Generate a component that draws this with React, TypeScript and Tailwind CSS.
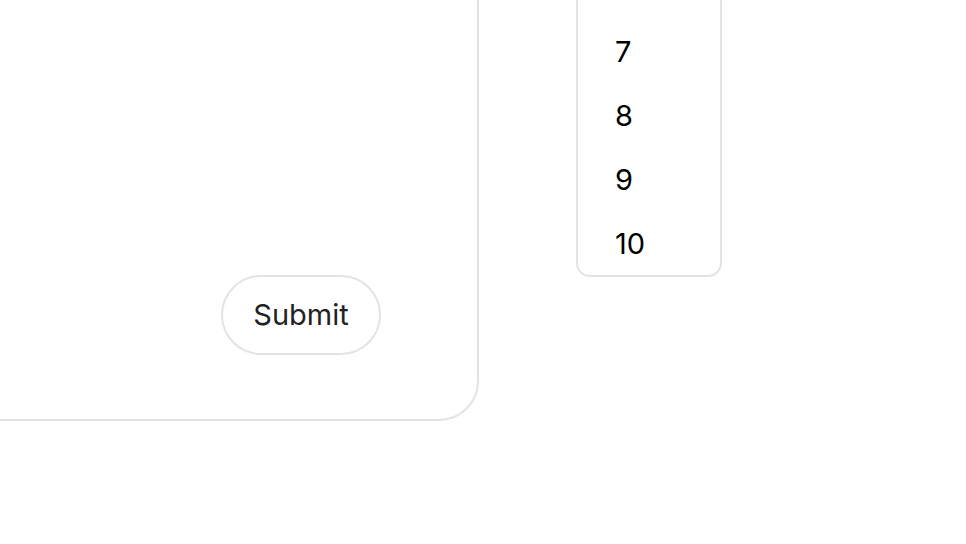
import { useState } from "react";

// only the tail of the open list is in view
const options = [7, 8, 9, 10];

function App() {
  const [picked, setPicked] = useState<number | null>(null);

  return (
    <div className="relative h-[544px] w-[966px] overflow-hidden bg-white font-['Inter',sans-serif]">
      {/* Form card, scrolled so only its lower right corner shows */}
      <div className="-ml-[200px] -mt-[200px] flex h-[621px] w-[679px] flex-col items-end justify-end rounded-[40px] border-2 border-[#e3e3e3] pb-[64px] pr-[96px]">
        <button
          type="button"
          className="h-[80px] w-[160px] rounded-full border-2 border-[#e3e3e3] bg-white text-[29px] text-[#222]"
        >
          Submit
        </button>
      </div>

      {/* Open select list */}
      <ul className="absolute left-[576px] top-[-41px] w-[146px] rounded-b-[14px] border-2 border-t-0 border-[#e3e3e3] bg-white pb-0 pt-[61px]">
        {options.map((n, i) => (
          <li
            key={n}
            onClick={() => setPicked(n)}
            className={
              "flex items-center pl-[37px] text-[29px] text-black " +
              (i === options.length - 1 ? "h-[63px] " : "h-[64px] ") +
              (picked === n ? "bg-gray-100" : "")
            }
          >
            {n}
          </li>
        ))}
      </ul>
    </div>
  );
}

export default App;
